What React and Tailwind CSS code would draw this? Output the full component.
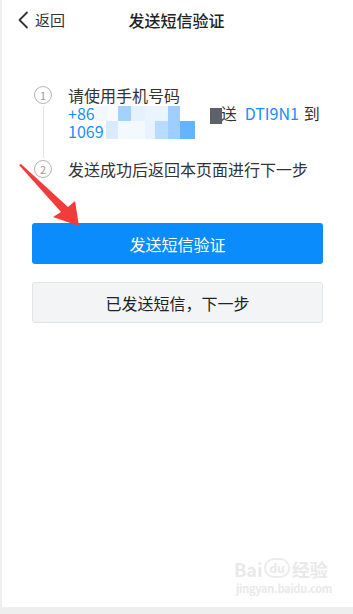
import React from 'react';

const font = { fontFamily: '"Noto Sans CJK SC", "Noto Sans", sans-serif' };

function StepDot({ n }) {
  return (
    <div className="w-[18px] h-[18px] rounded-full border border-[#b4b4b4] flex items-center justify-center text-[11px] leading-none text-[#9a9a9a] bg-white shrink-0">
      {n}
    </div>
  );
}

function Mosaic() {
  // pixelated cover over the phone numbers
  const blocks = [
    { l: 28, t: 0, w: 12, h: 15, c: '#f3f8ff' },
    { l: 40, t: 0, w: 10, h: 15, c: '#f8fbff' },
    { l: 50, t: 0, w: 13, h: 15, c: '#a3d2ff' },
    { l: 63, t: 0, w: 14, h: 15, c: '#e4f1ff' },
    { l: 77, t: 0, w: 23, h: 15, c: '#eaf4ff' },
    { l: 100, t: 0, w: 12, h: 15, c: '#9fcfff' },
    { l: 112, t: 0, w: 30, h: 15, c: '#ffffff' },
    { l: 142, t: 2, w: 12, h: 16, c: '#5d6168' },
    { l: 38, t: 15, w: 12, h: 18, c: '#d9ecff' },
    { l: 50, t: 15, w: 27, h: 18, c: '#f4f9ff' },
    { l: 77, t: 15, w: 10, h: 18, c: '#e8f3ff' },
    { l: 87, t: 15, w: 13, h: 18, c: '#b8dcff' },
    { l: 100, t: 15, w: 12, h: 18, c: '#9ccfff' },
    { l: 112, t: 15, w: 15, h: 18, c: '#66b3ff' },
  ];
  return (
    <div className="absolute left-0 top-[20px] w-[160px] h-[34px]">
      {blocks.map((b, i) => (
        <div
          key={i}
          className="absolute"
          style={{ left: b.l, top: b.t, width: b.w, height: b.h, background: b.c }}
        />
      ))}
    </div>
  );
}

export default function App() {
  return (
    <div className="w-[353px] h-[614px] bg-[#eeeeee] overflow-hidden" style={font}>
      <div className="relative ml-[2px] h-[607px] bg-white">
        {/* header */}
        <div className="h-10 grid grid-cols-[1fr_auto_1fr] items-center">
          <div className="flex items-center pl-[15px] text-[15px] text-[#333]">
            <svg width="12" height="18" viewBox="0 0 12 18" fill="none">
              <path d="M10 1.5 2.5 9 10 16.5" stroke="#333" strokeWidth="1.8" strokeLinecap="round" strokeLinejoin="round" />
            </svg>
            <span className="ml-[6px]">返回</span>
          </div>
          <div className="text-[16px] text-[#222] font-medium -ml-[2px]">发送短信验证</div>
          <div />
        </div>

        {/* steps */}
        <div className="mt-[46px] pl-[32px] pr-[10px] text-[16px] leading-[18px] text-[#333]">
          <div className="flex">
            <div className="flex flex-col items-center w-[18px]">
              <StepDot n="1" />
              <div className="flex-1 w-px bg-[#e2e2e2] my-[2px]" />
            </div>
            <div className="relative ml-[16px] pb-[20px]">
              <div>请使用手机号码</div>
              <div className="whitespace-nowrap">
                <span className="text-[#1a8cff]">+86</span>
                <span className="inline-block w-[126px]" />
                <span>送</span>
                <span className="text-[#1a8cff] ml-[8px] mr-[5px]">DTI9N1</span>
                <span>到</span>
              </div>
              <div className="text-[#1a8cff] whitespace-nowrap">1069</div>
              <Mosaic />
            </div>
          </div>
          <div className="flex">
            <div className="flex flex-col items-center w-[18px]">
              <StepDot n="2" />
            </div>
            <div className="ml-[16px]">发送成功后返回本页面进行下一步</div>
          </div>
        </div>

        {/* buttons */}
        <div className="mx-[30px] mt-[45px] flex flex-col gap-[18px]">
          <button className="h-[41px] w-full rounded-[3px] bg-[#0b8cfd] text-white text-[16px]">
            发送短信验证
          </button>
          <button className="h-[41px] w-full rounded-[3px] bg-[#f3f4f6] border border-[#e3e4e6] text-[#222] text-[16px]">
            已发送短信，下一步
          </button>
        </div>

        {/* red arrow annotation */}
        <svg className="absolute left-0 top-0 pointer-events-none" width="100" height="240" viewBox="0 0 100 240">
          <path d="M17 165 L19 164 L66 207 L73 201 L77 226 L51 217 L59 212 Z" fill="#f23b3b" />
        </svg>

        {/* watermark */}
        <div className="absolute left-[232px] top-[558px] text-[#e9e9e9] leading-none select-none">
          <div className="flex items-end text-[18px] font-bold">
            <span>Bai</span>
            <span className="mx-[2px] text-[12px] border-2 border-[#ececec] rounded-full px-[3px] py-[2px]">du</span>
            <span>经验</span>
          </div>
          <div className="mt-[5px] text-[11px] font-bold tracking-tight pl-[2px]">jingyan.baidu.com</div>
        </div>
      </div>
    </div>
  );
}
